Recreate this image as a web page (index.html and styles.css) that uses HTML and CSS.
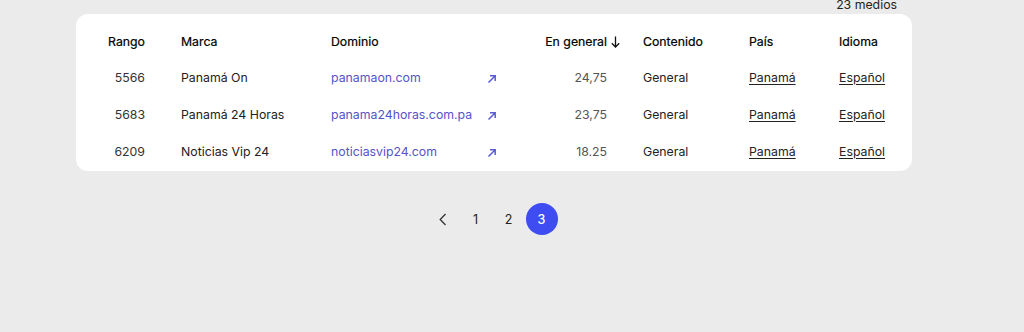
FILE: index.html
```html
<!DOCTYPE html>
<html lang="es">
<head>
    <meta charset="UTF-8">
    <meta name="viewport" content="width=device-width, initial-scale=1.0">
    <title>Medios</title>
    <link rel="stylesheet" href="styles.css">
</head>
<body>
    <main class="wrap">
        <div class="count">23 medios</div>
        <div class="card">
            <div class="row head">
                <div class="num">Rango</div>
                <div>Marca</div>
                <div>Dominio</div>
                <div></div>
                <div class="score">En general
                    <svg class="sort" width="9" height="12" viewBox="0 0 9 12">
                        <path d="M4.5 0.5 V11 M0.8 7.3 L4.5 11 L8.2 7.3" fill="none" stroke="#111" stroke-width="1.3"/>
                    </svg>
                </div>
                <div class="pad">Contenido</div>
                <div>País</div>
                <div>Idioma</div>
            </div>
            <div class="row">
                <div class="num">5566</div>
                <div>Panamá On</div>
                <div><a class="domain" href="#">panamaon.com</a></div>
                <div class="ext"><svg width="10" height="10" viewBox="0 0 10 10"><path d="M1.5 8.5 L8 2 M3 1.8 H8.2 V7" fill="none" stroke="#5b5bd6" stroke-width="1.5"/></svg></div>
                <div class="score val">24,75</div>
                <div class="pad">General</div>
                <div><a class="plain" href="#">Panamá</a></div>
                <div><a class="plain" href="#">Español</a></div>
            </div>
            <div class="row">
                <div class="num">5683</div>
                <div>Panamá 24 Horas</div>
                <div><a class="domain" href="#">panama24horas.com.pa</a></div>
                <div class="ext"><svg width="10" height="10" viewBox="0 0 10 10"><path d="M1.5 8.5 L8 2 M3 1.8 H8.2 V7" fill="none" stroke="#5b5bd6" stroke-width="1.5"/></svg></div>
                <div class="score val">23,75</div>
                <div class="pad">General</div>
                <div><a class="plain" href="#">Panamá</a></div>
                <div><a class="plain" href="#">Español</a></div>
            </div>
            <div class="row">
                <div class="num">6209</div>
                <div>Noticias Vip 24</div>
                <div><a class="domain" href="#">noticiasvip24.com</a></div>
                <div class="ext"><svg width="10" height="10" viewBox="0 0 10 10"><path d="M1.5 8.5 L8 2 M3 1.8 H8.2 V7" fill="none" stroke="#5b5bd6" stroke-width="1.5"/></svg></div>
                <div class="score val">18.25</div>
                <div class="pad">General</div>
                <div><a class="plain" href="#">Panamá</a></div>
                <div><a class="plain" href="#">Español</a></div>
            </div>
        </div>
        <nav class="pager">
            <a class="page" href="#">
                <svg width="8" height="13" viewBox="0 0 8 13"><path d="M6.5 1 L1.2 6.5 L6.5 12" fill="none" stroke="#333" stroke-width="1.3"/></svg>
            </a>
            <a class="page" href="#">1</a>
            <a class="page" href="#">2</a>
            <a class="page current" href="#">3</a>
        </nav>
    </main>
</body>
</html>
```

FILE: styles.css
```css
body {
    margin: 0;
    padding: 0;
    background-color: #ebebeb;
    font-family: Inter, "Noto Sans", sans-serif;
    font-size: 12.3px;
    color: #222;
}

.wrap {
    width: 836px;
    margin: -4px 0 0 76px;
}

.count {
    text-align: right;
    padding-right: 15px;
    height: 18px;
    line-height: 17px;
    color: #222;
}

.card {
    background-color: #fff;
    border-radius: 12px;
    padding: 9px 0 1px;
}

.row {
    display: grid;
    grid-template-columns: 105px 150px 156px 13px 120px 129px 90px 1fr;
    align-items: center;
    height: 37px;
}

.row.head {
    height: 36px;
    color: #000;
    -webkit-text-stroke: 0.2px #000;
}

.num {
    text-align: right;
    padding-right: 36px;
    color: #333;
}

.head .num {
    color: #000;
}

.score {
    display: flex;
    justify-content: flex-end;
    align-items: center;
    gap: 4px;
}

.score.val {
    padding-right: 13px;
    color: #555;
}

.sort {
    margin-top: 1px;
}

.pad {
    padding-left: 23px;
}

.ext {
    display: flex;
    align-items: center;
    padding-top: 3px;
}

.domain {
    color: #5454c8;
    text-decoration: none;
}

.plain {
    color: #222;
    text-decoration: underline;
    text-underline-offset: 2px;
}

.pager {
    display: flex;
    justify-content: center;
    gap: 1px;
    margin-top: 32px;
    padding-right: 4px;
}

.page {
    width: 32px;
    height: 32px;
    border-radius: 50%;
    display: flex;
    align-items: center;
    justify-content: center;
    color: #222;
    text-decoration: none;
    font-size: 12.5px;
}

.page.current {
    background-color: #3f4cf2;
    color: #fff;
    font-weight: 500;
}
```
